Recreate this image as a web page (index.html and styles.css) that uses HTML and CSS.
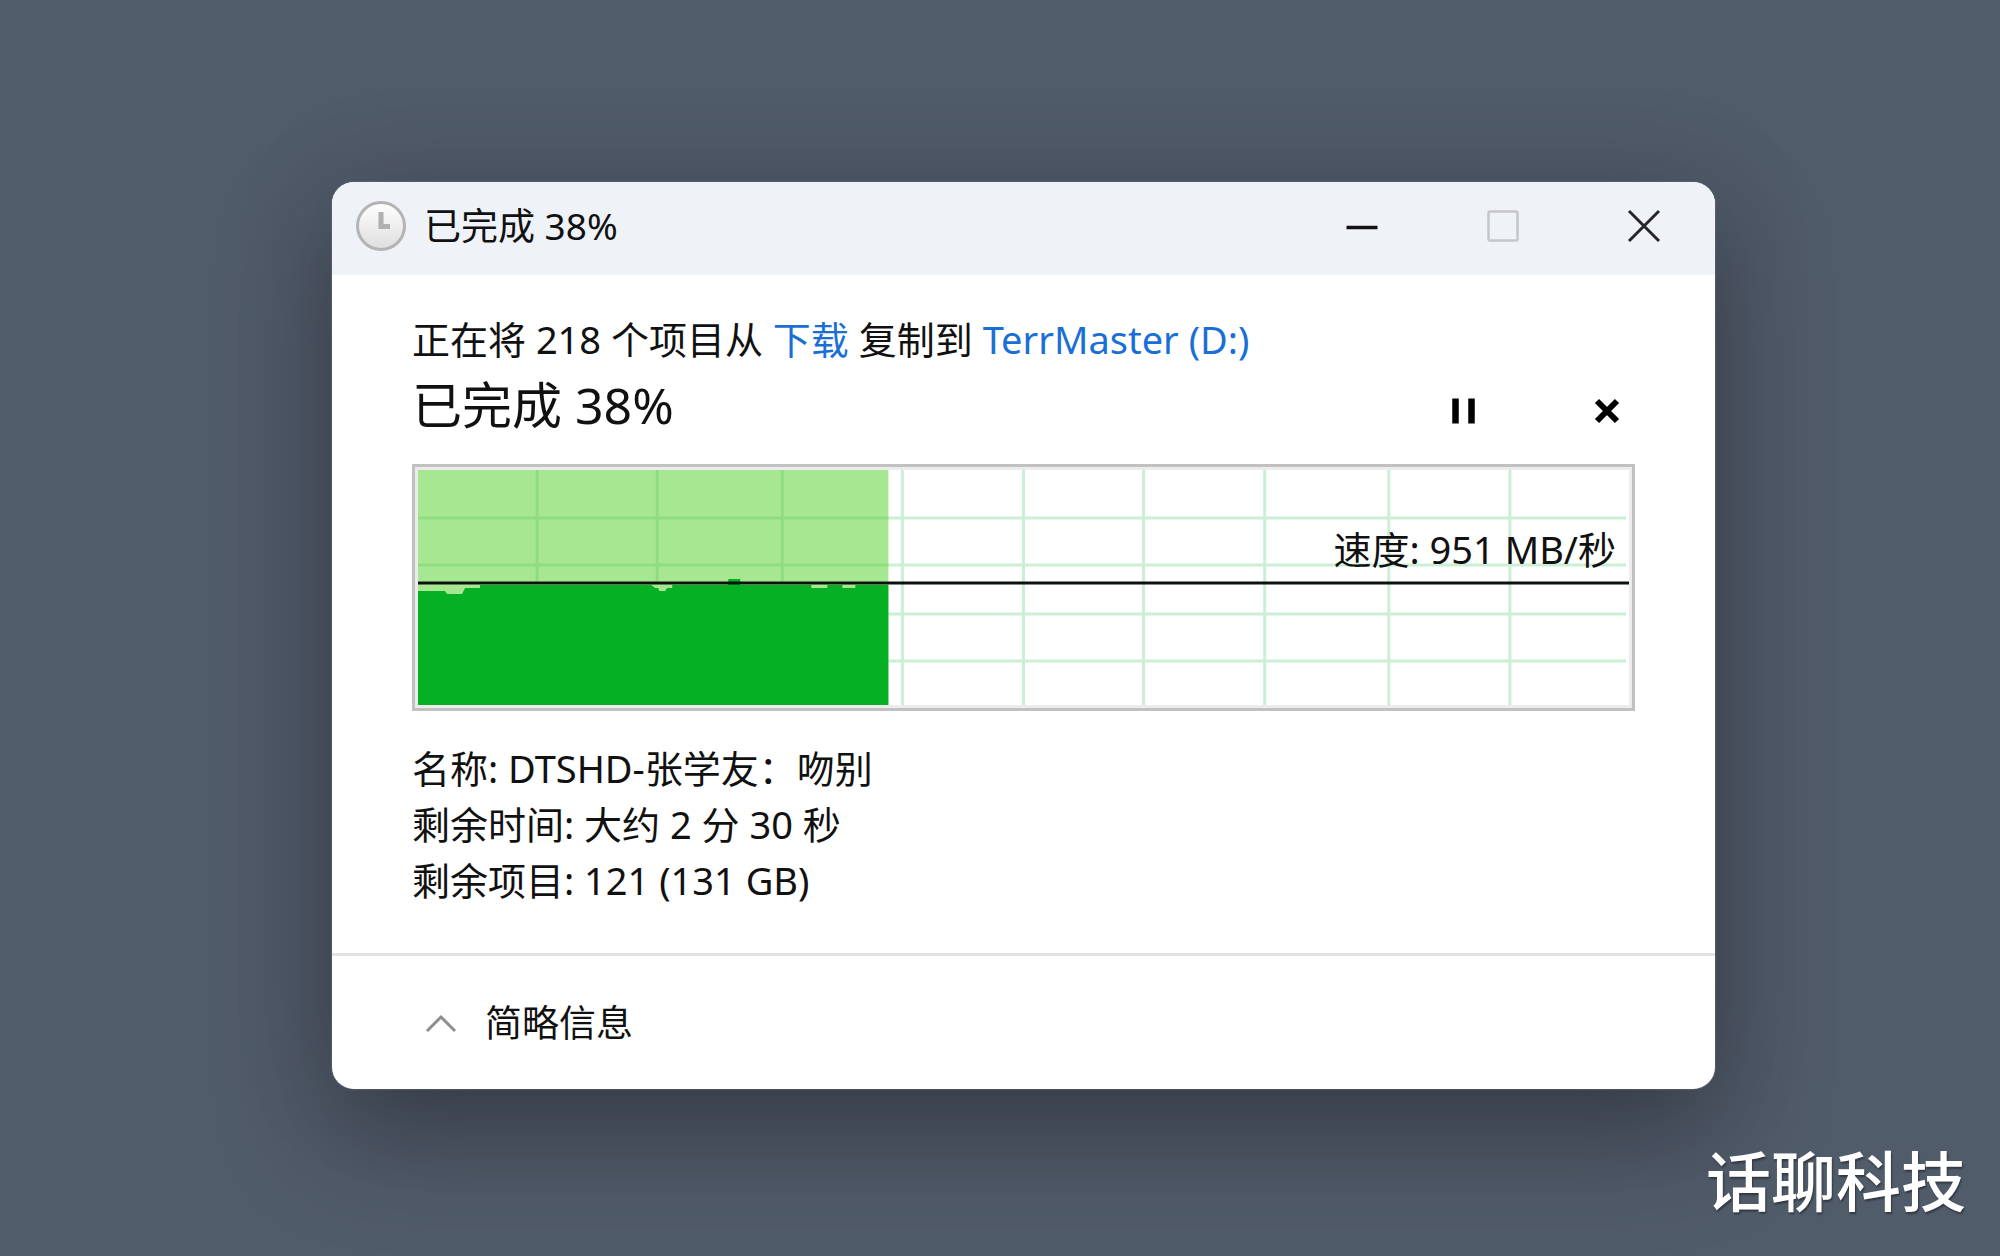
FILE: index.html
```html
<!DOCTYPE html>
<html lang="zh-CN">

<head>
    <meta charset="UTF-8" />
    <meta name="viewport" content="width=device-width, initial-scale=1.0" />
    <title>已完成 38%</title>

    <link rel="stylesheet" href="styles.css">
</head>

<body>
    <main class="window">
        <header class="titlebar">
            <svg class="clock" viewBox="0 0 50 50">
                <defs>
                    <linearGradient id="clockFace" x1="0" y1="0" x2="0" y2="1">
                        <stop offset="0" stop-color="#ffffff" />
                        <stop offset="1" stop-color="#dedede" />
                    </linearGradient>
                </defs>
                <circle cx="25" cy="25" r="23.5" fill="url(#clockFace)" stroke="#b4b4b4" stroke-width="3" />
                <path d="M25 11V25.500H34" fill="none" stroke="#b0b0b0" stroke-width="5" />
            </svg>
            <h1>已完成 38%</h1>
            <div class="window-buttons">
                <button type="button" aria-label="最小化">
                    <svg viewBox="0 0 34 34"><path d="M1.500 18.500H32.500" stroke="#111" stroke-width="3.500" /></svg>
                </button>
                <button type="button" aria-label="最大化" disabled>
                    <svg viewBox="0 0 34 34"><rect x="2.500" y="2.500" width="29" height="29" rx="1.500" fill="none" stroke="#c4c6ca" stroke-width="2.500" /></svg>
                </button>
                <button type="button" aria-label="关闭">
                    <svg viewBox="0 0 34 34"><path d="M2 2L32 32M32 2L2 32" stroke="#25272a" stroke-width="3" /></svg>
                </button>
            </div>
        </header>

        <section class="content">
            <p class="source">正在将 218 个项目从 <a href="#">下载</a> 复制到 <a href="#">TerrMaster (D:)</a></p>

            <div class="status">
                <h2>已完成 38%</h2>
                <div class="actions">
                    <button type="button" aria-label="暂停">
                        <svg viewBox="0 0 26 26"><path d="M4.500 0.500V25.500M20.500 0.500V25.500" stroke="#000" stroke-width="6.500" /></svg>
                    </button>
                    <button type="button" aria-label="取消">
                        <svg viewBox="0 0 26 26"><path d="M3 3L23 23M23 3L3 23" stroke="#000" stroke-width="6" /></svg>
                    </button>
                </div>
            </div>

            <div class="chart">
                <svg viewBox="0 0 1216 241" preserveAspectRatio="none">
                    <!-- grid -->
                    <path d="M122 3V238M242 3V238M367 3V238M487 3V238M608 3V238M728 3V238M849 3V238M973 3V238M1094 3V238M3 51H1210M3 98H1210M3 147H1210M3 194H1210" stroke="#cbefd5" stroke-width="3" />
                    <!-- copied part -->
                    <rect x="3" y="3" width="470" height="235" fill="#a7e792" />
                    <path d="M122 3V115M242 3V115M367 3V115M3 51H473M3 98H473" stroke="#8fdd80" stroke-width="3" />
                    <!-- speed history -->
                    <path d="M3 124H30L32 127H47L50 121H65V118H236L240 121H243L244 124H250L252 121H257V118H313V112H325V118H396V121H412V118H427V121H440V118H473V238H3Z" fill="#06b025" />
                    <path d="M3 116H1213" stroke="#0c120e" stroke-width="3" />
                </svg>
                <span class="speed">速度: 951 MB/秒</span>
            </div>

            <div class="details">
                <p>名称: DTSHD-张学友：吻别</p>
                <p>剩余时间: 大约 2 分 30 秒</p>
                <p>剩余项目: 121 (131 GB)</p>
            </div>
        </section>

        <footer>
            <button type="button" class="toggle">
                <svg viewBox="0 0 32 20"><path d="M2 18L16 4L30 18" fill="none" stroke="#8f8f8f" stroke-width="3" /></svg>
                简略信息
            </button>
        </footer>
    </main>

    <div class="watermark">话聊科技</div>
</body>

</html>
```
FILE: styles.css
```css
* {
    box-sizing: border-box;
}

body {
    margin: 0;
    min-height: 100vh;
    padding: 182px 14.25% 60px 16.6%;
    background-color: #515c6a;
    color: #111;
    font-family: "Noto Sans", "Noto Sans CJK SC", sans-serif;
    font-size: 38px;
    line-height: 56px;
}

h1,
h2,
p {
    margin: 0;
    font-weight: normal;
}

button {
    display: flex;
    justify-content: center;
    align-items: center;
    padding: 0;
    border: none;
    background: none;
    color: inherit;
    font: inherit;
}

a {
    color: #1a6fd6;
    text-decoration: none;
}

.window {
    border-radius: 22px;
    background-color: #fff;
    box-shadow: 0 0 2px #7d8490, 0 45px 110px rgba(24, 22, 28, 0.42), 0 0 100px rgba(50, 40, 60, 0.15);
}

.titlebar {
    display: flex;
    align-items: center;
    height: 93px;
    padding: 0 1px 6px 24px;
    border-radius: 22px 22px 0 0;
    background-color: #eff3f8;
}

.clock {
    width: 50px;
    height: 50px;
    margin-right: 18px;
}

h1 {
    font-size: 37px;
}

.window-buttons {
    display: flex;
    margin-left: auto;
}

.window-buttons button {
    width: 141px;
    height: 87px;
}

.window-buttons svg {
    width: 34px;
    height: 34px;
}

.content {
    padding: 36px 80px 45px;
}

.status {
    display: flex;
    justify-content: space-between;
    align-items: center;
    height: 80px;
}

h2 {
    padding-bottom: 4px;
    font-size: 50px;
}

.actions {
    display: flex;
    gap: 87px;
    padding-top: 8px;
}

.actions button {
    width: 56px;
    height: 56px;
}

.actions svg {
    width: 26px;
    height: 26px;
}

.chart {
    position: relative;
    height: 247px;
    margin: 17px 0 29px;
    border: 3px solid #c1c1c1;
    box-shadow: inset 0 0 0 3px #ececec;
}

.chart svg {
    display: block;
    width: 100%;
    height: 100%;
}

.speed {
    position: absolute;
    top: 54px;
    right: 16px;
}

footer {
    display: flex;
    align-items: center;
    height: 136px;
    padding-left: 93px;
    border-top: 3px solid #e3e3e3;
}

.toggle {
    font-size: 37px;
}

.toggle svg {
    width: 32px;
    height: 20px;
    margin-right: 28px;
}

.watermark {
    position: fixed;
    right: 34px;
    bottom: 30px;
    color: #fff;
    font-size: 65px;
    font-weight: 500;
    line-height: 96px;
    font-family: "Noto Sans CJK SC", sans-serif;
    text-shadow: 1px 2px 2px rgba(0, 0, 0, 0.4);
}
```
